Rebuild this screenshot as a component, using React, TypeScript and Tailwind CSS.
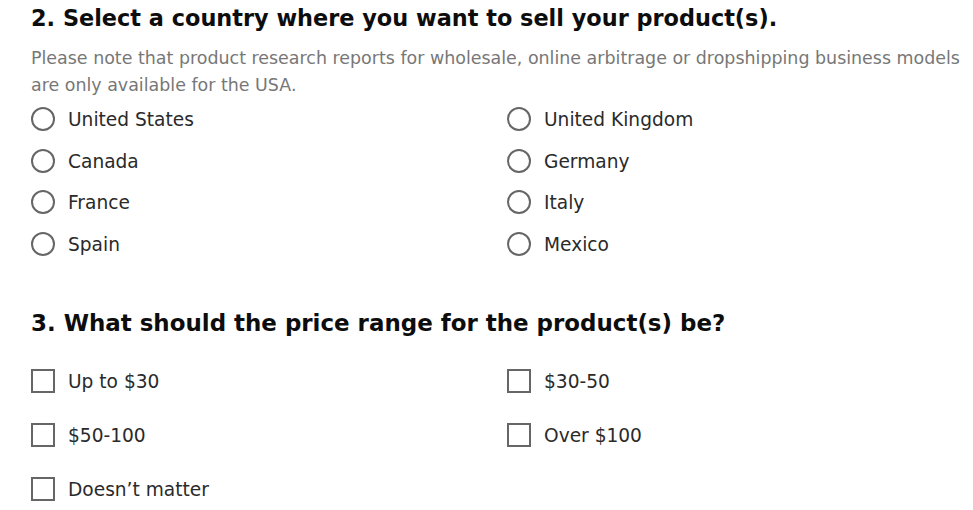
import React from "react";

const countries = [
  ["United States", "United Kingdom"],
  ["Canada", "Germany"],
  ["France", "Italy"],
  ["Spain", "Mexico"],
];

const prices = [
  ["Up to $30", "$30-50"],
  ["$50-100", "Over $100"],
  ["Doesn\u2019t matter", null],
];

function Radio({ label }: { label: string }) {
  return (
    <label className="flex h-[41.5px] items-center">
      <span className="box-border h-[24px] w-[24px] shrink-0 rounded-full border-2 border-[#666666] bg-white" />
      <span className="ml-[13px] mt-[3px] text-[18.6px] leading-none text-[#2a2a2a]">{label}</span>
    </label>
  );
}

function Check({ label }: { label: string }) {
  return (
    <label className="flex h-[54px] items-center">
      <span className="box-border h-[24px] w-[24px] shrink-0 border-2 border-[#666666] bg-white" />
      <span className="ml-[13px] mt-[3px] text-[18.6px] leading-none text-[#2a2a2a]">{label}</span>
    </label>
  );
}

export default function App() {
  return (
    <div
      className="h-[510px] w-[973px] overflow-hidden bg-white pl-[31px]"
      style={{ fontFamily: '"DejaVu Sans", sans-serif' }}
    >
      <h2 className="text-[22.4px] font-bold leading-[36px] text-[#0d0d0d]">
        2. Select a country where you want to sell your product(s).
      </h2>
      <p className="mt-[8.5px] w-[940px] text-[17.45px] leading-[27px] text-[#777777]">
        Please note that product research reports for wholesale, online arbitrage or dropshipping business models are
        only available for the USA.
      </p>
      <div className="grid grid-cols-[476px_476px]">
        {countries.map(([a, b]) => (
          <React.Fragment key={a}>
            <Radio label={a} />
            <Radio label={b} />
          </React.Fragment>
        ))}
      </div>
      <h2 className="mt-[40px] text-[22.95px] font-bold leading-[36px] text-[#0d0d0d]">
        3. What should the price range for the product(s) be?
      </h2>
      <div className="mt-[13px] grid grid-cols-[476px_476px]">
        {prices.map(([a, b]) => (
          <React.Fragment key={a as string}>
            <Check label={a as string} />
            {b ? <Check label={b} /> : <div />}
          </React.Fragment>
        ))}
      </div>
    </div>
  );
}
